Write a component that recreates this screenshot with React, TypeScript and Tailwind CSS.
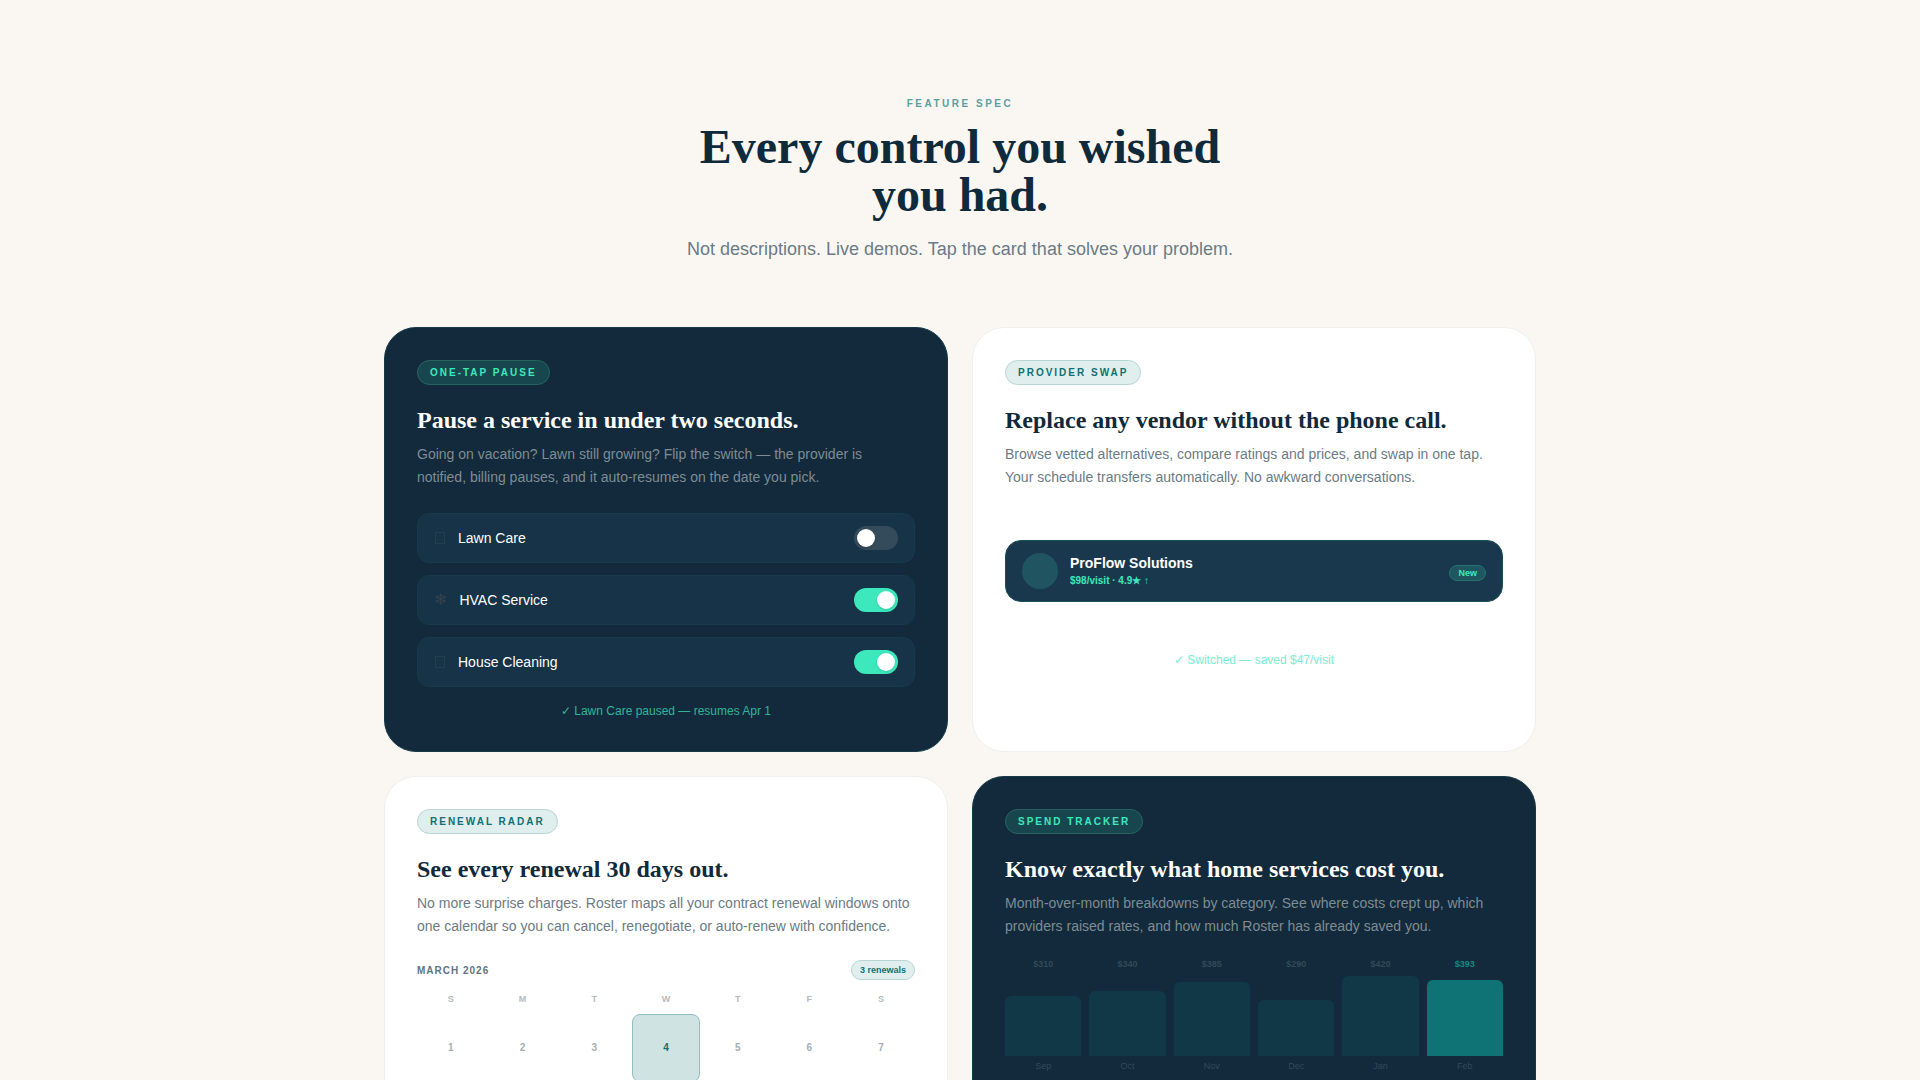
import { useState } from 'react'
import type { ReactNode } from 'react'

interface CardProps {
  tag: string
  title: string
  text: string
  dark?: boolean
  children: ReactNode
}

const services = [
  { icon: 'box', name: 'Lawn Care', active: false },
  { icon: 'snow', name: 'HVAC Service', active: true },
  { icon: 'box', name: 'House Cleaning', active: true }
]

const spend = [
  { month: 'Sep', amount: 310, height: 60 },
  { month: 'Oct', amount: 340, height: 65 },
  { month: 'Nov', amount: 385, height: 74 },
  { month: 'Dec', amount: 290, height: 56 },
  { month: 'Jan', amount: 420, height: 80 },
  { month: 'Feb', amount: 393, height: 76 }
]

const weekdays = ['S', 'M', 'T', 'W', 'T', 'F', 'S']
const firstWeek = [1, 2, 3, 4, 5, 6, 7]
const renewalDay = 4

const Card = (props: CardProps) => {
  const { tag, title, text, dark, children } = props

  return (
    <article
      className={
        dark
          ? 'rounded-[32px] border border-[#143a46] bg-[#122a3b] p-8 text-white'
          : 'rounded-[32px] border border-[#eff0ee] bg-white p-8 text-[#0f2a3b]'
      }
    >
      <div className="flex">
        <span
          className={
            dark
              ? 'rounded-full border border-[#26655f] bg-[#18464f] px-3 py-1 text-[10px] leading-[15px] font-bold tracking-[2px] text-[#3de8bd] uppercase'
              : 'rounded-full border border-[#b7d5d5] bg-[#e1eeee] px-3 py-1 text-[10px] leading-[15px] font-bold tracking-[2px] text-[#0f7173] uppercase'
          }
        >
          {tag}
        </span>
      </div>
      <h3 className="mt-5 mb-2 font-['Liberation_Serif',serif] text-2xl leading-[30px] font-bold">{title}</h3>
      <p className={dark ? 'text-sm leading-[23px] text-[#7f8c95]' : 'text-sm leading-[23px] text-[#6b7b86]'}>{text}</p>
      {children}
    </article>
  )
}

const ServiceIcon = ({ icon }: { icon: string }) =>
  icon === 'snow' ? (
    <span className="font-['DejaVu_Sans',sans-serif] text-base leading-5 text-[#34434e]">❄</span>
  ) : (
    <svg width="12" height="14" viewBox="0 0 12 14" fill="none" stroke="#263d4e" aria-hidden="true">
      <rect x="1.5" y="1.5" width="9" height="11" />
    </svg>
  )

const PauseDemo = () => {
  const [active, setActive] = useState<boolean[]>(services.map((s) => s.active))

  const toggle = (index: number) => {
    setActive(active.map((value, i) => (i === index ? !value : value)))
  }

  return (
    <div className="mt-6">
      <div className="flex flex-col gap-3">
        {services.map((service, index) => (
          <label
            key={service.name}
            className="flex cursor-pointer items-center justify-between rounded-xl border border-[#19394a] bg-[#163347] px-4 py-3"
          >
            <span className="flex items-center gap-3">
              <ServiceIcon icon={service.icon} />
              <span className="text-sm">{service.name}</span>
            </span>
            <input
              type="checkbox"
              role="switch"
              checked={active[index]}
              onChange={() => toggle(index)}
              className="h-6 w-11 cursor-pointer appearance-none rounded-full bg-[#344b5c] p-[3px] transition-colors before:block before:size-[18px] before:rounded-full before:bg-white before:shadow-sm before:content-[''] checked:bg-[#3de8bd] checked:before:ml-5"
            />
          </label>
        ))}
      </div>
      <p className="mt-4 text-center text-xs text-[#30b59b]">✓ Lawn Care paused — resumes Apr 1</p>
    </div>
  )
}

const SwapDemo = () => (
  <div className="mt-[51px]">
    <div className="flex items-center gap-3 rounded-2xl border border-[#1c5058] bg-[#1a384d] px-4 py-3">
      <span className="size-9 rounded-full bg-[#205460]" />
      <div className="flex-1">
        <p className="text-sm leading-5 font-bold text-white">ProFlow Solutions</p>
        <p className="text-[10px] leading-4 font-bold text-[#3de8bd]">$98/visit · 4.9★ ↑</p>
      </div>
      <span className="mt-1 rounded-full border border-[#27716f] bg-[#1f5761] px-2 text-[9px] leading-[14px] font-bold text-[#3de8bd]">New</span>
    </div>
    <p className="mt-[50px] text-center text-xs text-[#7cecd0]">✓ Switched — saved $47/visit</p>
  </div>
)

const RenewalDemo = () => (
  <div className="mt-[22px]">
    <div className="flex items-center justify-between">
      <span className="text-[10px] font-bold tracking-[1px] text-[#61747f] uppercase">March 2026</span>
      <span className="rounded-full border border-[#b7d5d5] bg-[#e1eeee] px-2 text-[9px] leading-[18px] font-bold text-[#0f7173]">3 renewals</span>
    </div>
    <div className="-mx-1 mt-[10px]">
      <table className="w-full table-fixed border-separate border-spacing-x-1 border-spacing-y-0 text-center">
        <thead>
          <tr>
            {weekdays.map((day, index) => (
              <th key={index} className="h-6 pb-1 text-[9px] font-bold text-[#b4bbc0]">
                {day}
              </th>
            ))}
          </tr>
        </thead>
        <tbody>
          <tr>
            {firstWeek.map((day) => (
              <td key={day} className="p-0">
                <div
                  className={
                    day === renewalDay
                      ? 'flex aspect-square items-center justify-center rounded-lg border border-[#8fbfbf] bg-[#cfe3e3] text-[10px] font-bold text-[#0f7173]'
                      : 'flex aspect-square items-center justify-center text-[10px] font-bold text-[#a5aeb4]'
                  }
                >
                  {day}
                </div>
              </td>
            ))}
          </tr>
        </tbody>
      </table>
    </div>
  </div>
)

const SpendDemo = () => (
  <div className="mt-5 flex items-end gap-2">
    {spend.map((item) => (
      <div key={item.month} className="flex-1 text-center text-[9px] leading-3 text-[#33495a]">
        <div className="flex h-[98px] flex-col justify-between">
          <span className={item.month === 'Feb' ? 'font-bold text-[#0f8a82]' : 'font-bold'}>${item.amount}</span>
          <div
            className={item.month === 'Feb' ? 'rounded-t-md bg-[#0f7375]' : 'rounded-t-md bg-[#113847]'}
            style={{ height: item.height }}
          />
        </div>
        <span className="mt-1 block">{item.month}</span>
      </div>
    ))}
  </div>
)

const App = () => {
  return (
    <main className="min-h-screen bg-[#faf7f2] px-6 py-24 font-['Liberation_Sans',sans-serif]">
      <header className="mx-auto mb-16 text-center">
        <p className="text-[10px] leading-[15px] font-bold tracking-[2.5px] text-[#5c9f9f] uppercase">Feature Spec</p>
        <h2 className="mx-auto mt-3 max-w-xl font-['Liberation_Serif',serif] text-5xl leading-12 font-bold text-[#0f2a3b]">
          Every control you wished you had.
        </h2>
        <p className="mt-4 text-lg leading-7 text-[#6b7b86]">Not descriptions. Live demos. Tap the card that solves your problem.</p>
      </header>
      <section className="mx-auto grid max-w-6xl grid-cols-2 gap-6">
        <Card
          dark
          tag="One-Tap Pause"
          title="Pause a service in under two seconds."
          text="Going on vacation? Lawn still growing? Flip the switch — the provider is notified, billing pauses, and it auto-resumes on the date you pick."
        >
          <PauseDemo />
        </Card>
        <Card
          tag="Provider Swap"
          title="Replace any vendor without the phone call."
          text="Browse vetted alternatives, compare ratings and prices, and swap in one tap. Your schedule transfers automatically. No awkward conversations."
        >
          <SwapDemo />
        </Card>
        <Card
          tag="Renewal Radar"
          title="See every renewal 30 days out."
          text="No more surprise charges. Roster maps all your contract renewal windows onto one calendar so you can cancel, renegotiate, or auto-renew with confidence."
        >
          <RenewalDemo />
        </Card>
        <Card
          dark
          tag="Spend Tracker"
          title="Know exactly what home services cost you."
          text="Month-over-month breakdowns by category. See where costs crept up, which providers raised rates, and how much Roster has already saved you."
        >
          <SpendDemo />
        </Card>
      </section>
    </main>
  )
}

export default App
